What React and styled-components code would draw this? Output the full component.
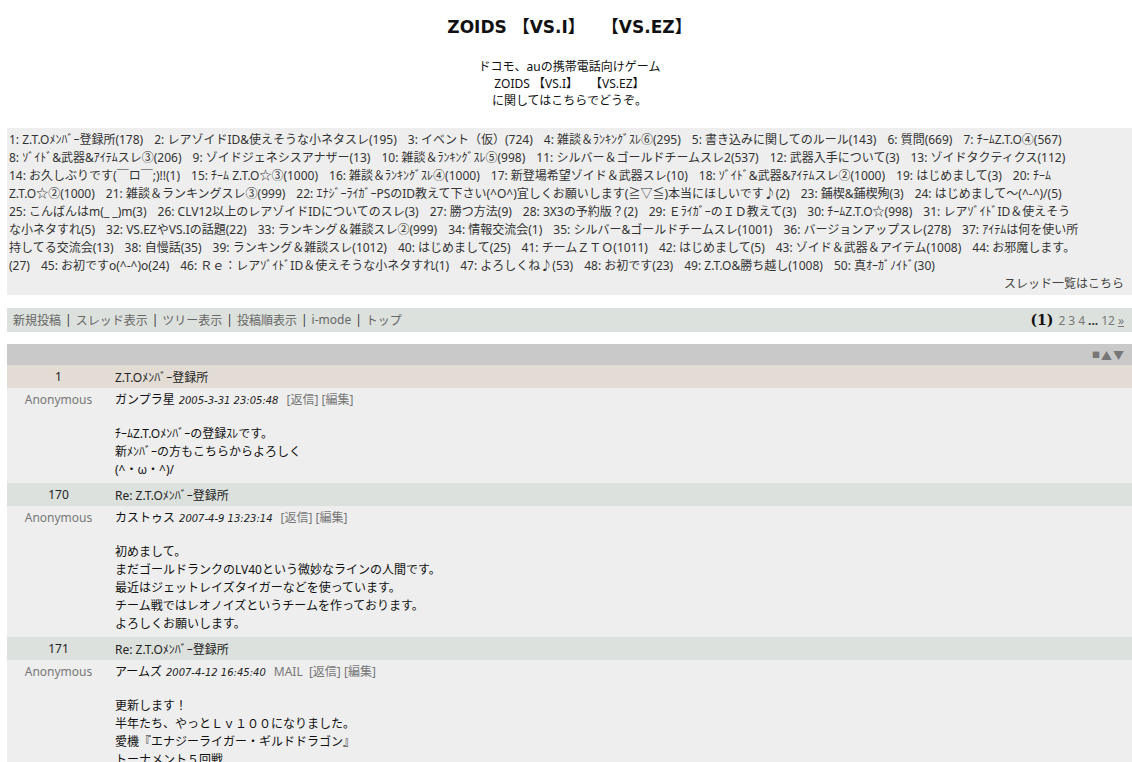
import React from 'react';
import styled, { createGlobalStyle } from 'styled-components';

const GlobalStyle = createGlobalStyle`
  html, body {
    margin: 0;
    padding: 0;
    background: #fff;
  }
  body {
    font-family: "Noto Sans", "Noto Sans CJK JP", sans-serif;
    font-size: 12px;
    color: #222;
  }
`;

const Page = styled.div`
  padding: 0 0 0 7px;
`;

const Header = styled.header`
  text-align: center;
  padding-top: 16px;
`;

const Title = styled.h1`
  margin: 0;
  font-family: "DejaVu Sans", "Noto Sans CJK JP", sans-serif;
  font-size: 17px;
  line-height: 22px;
  font-weight: bold;
  color: #111;
`;

const Lead = styled.p`
  margin: 20px 0 0;
  line-height: 17px;
  color: #111;
`;

const ThreadBox = styled.div`
  margin-top: 19px;
  background: #eeeeee;
  padding: 3px 8px 2px 2px;
  line-height: 18px;
  color: #333;
`;

const ThreadLine = styled.div`
  display: flex;
  gap: 11px;
  white-space: nowrap;
`;

const ThreadLink = styled.a`
  color: #333;
  text-decoration: none;
`;

const MoreLine = styled.div`
  text-align: right;
  color: #444;
`;

const NavBar = styled.nav`
  margin-top: 13px;
  background: #dde1dd;
  height: 24px;
  padding: 0 8px 0 6px;
  display: flex;
  align-items: center;
  justify-content: space-between;
  color: #333;
`;

const NavLinks = styled.div`
  display: flex;
  gap: 4px;
`;

const NavLink = styled.a`
  color: #666;
  text-decoration: none;
`;

const Pager = styled.div`
  display: flex;
  align-items: baseline;
  gap: 3px;
  color: #777;
`;

const Current = styled.b`
  font-family: "DejaVu Serif", "Liberation Serif", serif;
  font-size: 14px;
  color: #111;
  margin-right: 2px;
`;

const Dots = styled.b`
  color: #333;
`;

const Next = styled.a`
  color: #777;
  text-decoration: underline;
`;

const Board = styled.div`
  margin-top: 12px;
`;

const BoardHead = styled.div`
  background: #c9c9c9;
  height: 21px;
  display: flex;
  align-items: center;
  justify-content: flex-end;
  gap: 1px;
  padding-right: 8px;
  color: #777;
  font-size: 11px;
`;

const Small = styled.span`
  font-size: 8px;
`;

const TitleRow = styled.div`
  display: flex;
  align-items: center;
  height: 23px;
  background: ${p => (p.$first ? '#e2dcd5' : '#dde1dd')};
  color: #222;
`;

const NumCell = styled.div`
  width: 103px;
  text-align: center;
  flex-shrink: 0;
`;

const SubjectCell = styled.div`
  padding-left: 5px;
`;

const PostRow = styled.div`
  display: flex;
  background: #eeeeee;
  padding: 3px 0 4px;
  line-height: 18px;
`;

const AuthorCell = styled.div`
  width: 103px;
  flex-shrink: 0;
  text-align: center;
  color: #777;
`;

const PostCell = styled.div`
  padding-left: 5px;
`;

const PostMeta = styled.div`
  color: #111;
`;

const PostDate = styled.i`
  font-family: "DejaVu Sans", sans-serif;
  font-size: 10px;
  color: #222;
  margin: 0 8px 0 4px;
`;

const MetaLink = styled.a`
  color: #777;
  text-decoration: none;
`;

const PostBody = styled.div`
  margin-top: 15px;
  color: #111;
`;

// each line of the thread index, as the old board wrapped it; null = continued title
const threadLines = [
  [
    [1, 'Z.T.Oﾒﾝﾊﾞｰ登録所(178)'],
    [2, 'レアゾイドID&使えそうな小ネタスレ(195)'],
    [3, 'イベント（仮）(724)'],
    [4, '雑談＆ﾗﾝｷﾝｸﾞｽﾚ⑥(295)'],
    [5, '書き込みに関してのルール(143)'],
    [6, '質問(669)'],
    [7, 'ﾁｰﾑZ.T.O④(567)'],
  ],
  [
    [8, 'ｿﾞｲﾄﾞ&武器&ｱｲﾃﾑスレ③(206)'],
    [9, 'ゾイドジェネシスアナザー(13)'],
    [10, '雑談＆ﾗﾝｷﾝｸﾞｽﾚ⑤(998)'],
    [11, 'シルバー＆ゴールドチームスレ2(537)'],
    [12, '武器入手について(3)'],
    [13, 'ゾイドタクティクス(112)'],
  ],
  [
    [14, 'お久しぶりです(￣ロ￣;)!!(1)'],
    [15, 'ﾁｰﾑ Z.T.O☆③(1000)'],
    [16, '雑談＆ﾗﾝｷﾝｸﾞｽﾚ④(1000)'],
    [17, '新登場希望ゾイド＆武器スレ(10)'],
    [18, 'ｿﾞｲﾄﾞ&武器&ｱｲﾃﾑスレ②(1000)'],
    [19, 'はじめまして(3)'],
    [20, 'ﾁｰﾑ'],
  ],
  [
    [null, 'Z.T.O☆②(1000)'],
    [21, '雑談＆ランキングスレ③(999)'],
    [22, 'ｴﾅｼﾞｰﾗｲｶﾞｰPSのID教えて下さい(^O^)宜しくお願いします(≧▽≦)本当にほしいです♪(2)'],
    [23, '鋪楔&鋪楔殉(3)'],
    [24, 'はじめまして～(^-^)/(5)'],
  ],
  [
    [25, 'こんばんはm(_ _)m(3)'],
    [26, 'CLV12以上のレアゾイドIDについてのスレ(3)'],
    [27, '勝つ方法(9)'],
    [28, '3X3の予約版？(2)'],
    [29, 'ＥﾗｲｶﾞｰのＩＤ教えて(3)'],
    [30, 'ﾁｰﾑZ.T.O☆(998)'],
    [31, 'レアｿﾞｲﾄﾞID＆使えそう'],
  ],
  [
    [null, 'な小ネタすれ(5)'],
    [32, 'VS.EZやVS.Iの話題(22)'],
    [33, 'ランキング＆雑談スレ②(999)'],
    [34, '情報交流会(1)'],
    [35, 'シルバー&ゴールドチームスレ(1001)'],
    [36, 'バージョンアップスレ(278)'],
    [37, 'ｱｲﾃﾑは何を使い所'],
  ],
  [
    [null, '持してる交流会(13)'],
    [38, '自慢話(35)'],
    [39, 'ランキング＆雑談スレ(1012)'],
    [40, 'はじめまして(25)'],
    [41, 'チームＺＴＯ(1011)'],
    [42, 'はじめまして(5)'],
    [43, 'ゾイド＆武器＆アイテム(1008)'],
    [44, 'お邪魔します。'],
  ],
  [
    [null, '(27)'],
    [45, 'お初ですo(^-^)o(24)'],
    [46, 'Ｒｅ：レアｿﾞｲﾄﾞID＆使えそうな小ネタすれ(1)'],
    [47, 'よろしくね♪(53)'],
    [48, 'お初です(23)'],
    [49, 'Z.T.O&勝ち越し(1008)'],
    [50, '真ｵｰｶﾞﾉｲﾄﾞ(30)'],
  ],
];

const navItems = ['新規投稿', 'スレッド表示', 'ツリー表示', '投稿順表示', 'i-mode', 'トップ'];

const posts = [
  {
    no: 1,
    subject: 'Z.T.Oﾒﾝﾊﾞｰ登録所',
    name: 'ガンプラ星',
    date: '2005-3-31 23:05:48',
    body: ['ﾁｰﾑZ.T.Oﾒﾝﾊﾞｰの登録ｽﾚです。', '新ﾒﾝﾊﾞｰの方もこちらからよろしく', '(^・ω・^)/'],
  },
  {
    no: 170,
    subject: 'Re: Z.T.Oﾒﾝﾊﾞｰ登録所',
    name: 'カストゥス',
    date: '2007-4-9 13:23:14',
    body: [
      '初めまして。',
      'まだゴールドランクのLV40という微妙なラインの人間です。',
      '最近はジェットレイズタイガーなどを使っています。',
      'チーム戦ではレオノイズというチームを作っております。',
      'よろしくお願いします。',
    ],
  },
  {
    no: 171,
    subject: 'Re: Z.T.Oﾒﾝﾊﾞｰ登録所',
    name: 'アームズ',
    date: '2007-4-12 16:45:40',
    mail: true,
    body: [
      '更新します！',
      '半年たち、やっとＬｖ１００になりました。',
      '愛機『エナジーライガー・ギルドドラゴン』',
      'トーナメント５回戦',
      'ポイント１２００',
    ],
  },
];

const Post = ({ post, first }) => (
  <>
    <TitleRow $first={first}>
      <NumCell>{post.no}</NumCell>
      <SubjectCell>{post.subject}</SubjectCell>
    </TitleRow>
    <PostRow>
      <AuthorCell>Anonymous</AuthorCell>
      <PostCell>
        <PostMeta>
          {post.name}
          <PostDate>{post.date}</PostDate>
          {post.mail && <MetaLink href="#">MAIL&nbsp;&nbsp;</MetaLink>}
          <MetaLink href="#">[返信]</MetaLink> <MetaLink href="#">[編集]</MetaLink>
        </PostMeta>
        <PostBody>
          {post.body.map((line, i) => (
            <div key={i}>{line}</div>
          ))}
        </PostBody>
      </PostCell>
    </PostRow>
  </>
);

export default function App() {
  return (
    <Page>
      <GlobalStyle />
      <Header>
        <Title>ZOIDS 【VS.I】　　【VS.EZ】</Title>
        <Lead>
          ドコモ、auの携帯電話向けゲーム
          <br />
          ZOIDS 【VS.I】　　【VS.EZ】
          <br />
          に関してはこちらでどうぞ。
        </Lead>
      </Header>

      <ThreadBox>
        {threadLines.map((line, li) => (
          <ThreadLine key={li}>
            {line.map(([n, text], i) => (
              <ThreadLink key={i} href="#">
                {n ? `${n}: ${text}` : text}
              </ThreadLink>
            ))}
          </ThreadLine>
        ))}
        <MoreLine>スレッド一覧はこちら</MoreLine>
      </ThreadBox>

      <NavBar>
        <NavLinks>
          {navItems.map((item, i) => (
            <React.Fragment key={item}>
              {i > 0 && <span>|</span>}
              <NavLink href="#">{item}</NavLink>
            </React.Fragment>
          ))}
        </NavLinks>
        <Pager>
          <Current>(1)</Current>
          <span>2</span>
          <span>3</span>
          <span>4</span>
          <Dots>...</Dots>
          <span>12</span>
          <Next href="#">»</Next>
        </Pager>
      </NavBar>

      <Board>
        <BoardHead>
          <Small>■</Small>
          <span>▲</span>
          <span>▼</span>
        </BoardHead>
        {posts.map((p, i) => (
          <Post key={p.no} post={p} first={i === 0} />
        ))}
      </Board>
    </Page>
  );
}
